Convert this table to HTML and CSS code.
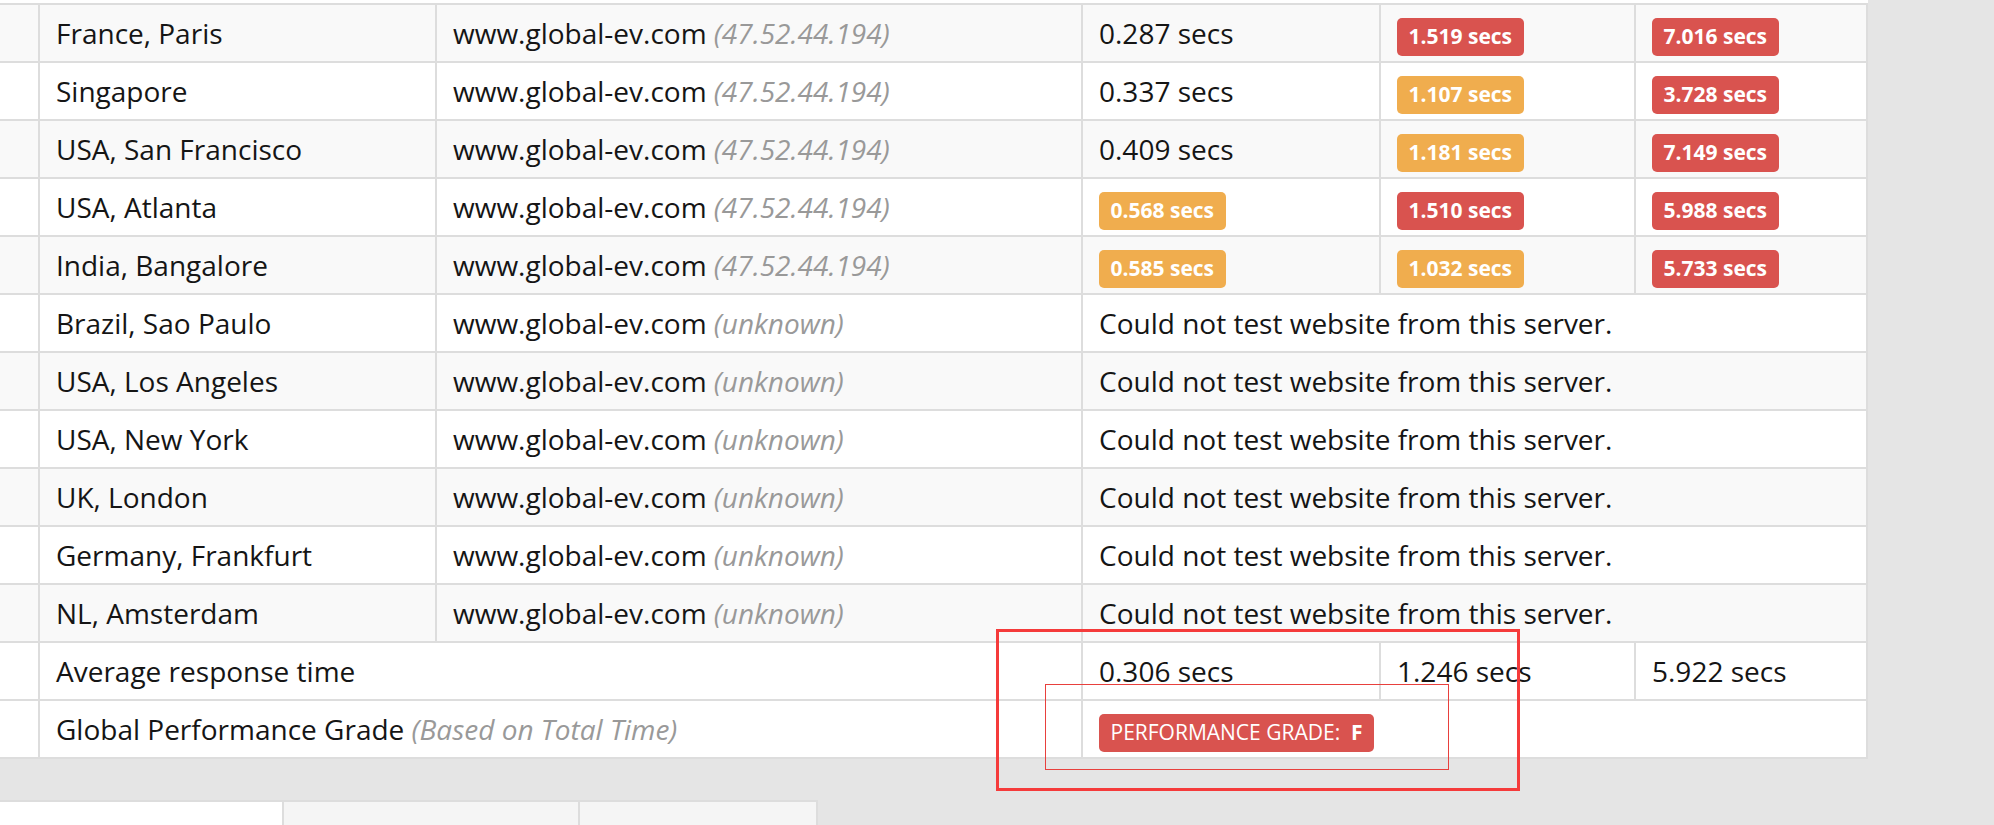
FILE: index.html
```html
<!DOCTYPE html>
<html lang="en">
<head>
<meta charset="utf-8">
<title>Global Performance</title>
<link rel="stylesheet" href="styles.css">
</head>
<body>
<div class="page">
  <div class="panel">
    <div class="results">
      <div class="row striped"><div class="cell"></div><div class="cell">France, Paris</div><div class="cell">www.global-ev.com <em class="ip">(47.52.44.194)</em></div><div class="cell">0.287 secs</div><div class="cell"><span class="label danger">1.519 secs</span></div><div class="cell"><span class="label danger">7.016 secs</span></div></div>
      <div class="row"><div class="cell"></div><div class="cell">Singapore</div><div class="cell">www.global-ev.com <em class="ip">(47.52.44.194)</em></div><div class="cell">0.337 secs</div><div class="cell"><span class="label warning">1.107 secs</span></div><div class="cell"><span class="label danger">3.728 secs</span></div></div>
      <div class="row striped"><div class="cell"></div><div class="cell">USA, San Francisco</div><div class="cell">www.global-ev.com <em class="ip">(47.52.44.194)</em></div><div class="cell">0.409 secs</div><div class="cell"><span class="label warning">1.181 secs</span></div><div class="cell"><span class="label danger">7.149 secs</span></div></div>
      <div class="row"><div class="cell"></div><div class="cell">USA, Atlanta</div><div class="cell">www.global-ev.com <em class="ip">(47.52.44.194)</em></div><div class="cell"><span class="label warning">0.568 secs</span></div><div class="cell"><span class="label danger">1.510 secs</span></div><div class="cell"><span class="label danger">5.988 secs</span></div></div>
      <div class="row striped"><div class="cell"></div><div class="cell">India, Bangalore</div><div class="cell">www.global-ev.com <em class="ip">(47.52.44.194)</em></div><div class="cell"><span class="label warning">0.585 secs</span></div><div class="cell"><span class="label warning">1.032 secs</span></div><div class="cell"><span class="label danger">5.733 secs</span></div></div>
      <div class="row"><div class="cell"></div><div class="cell">Brazil, Sao Paulo</div><div class="cell">www.global-ev.com <em class="ip">(unknown)</em></div><div class="cell span3">Could not test website from this server.</div></div>
      <div class="row striped"><div class="cell"></div><div class="cell">USA, Los Angeles</div><div class="cell">www.global-ev.com <em class="ip">(unknown)</em></div><div class="cell span3">Could not test website from this server.</div></div>
      <div class="row"><div class="cell"></div><div class="cell">USA, New York</div><div class="cell">www.global-ev.com <em class="ip">(unknown)</em></div><div class="cell span3">Could not test website from this server.</div></div>
      <div class="row striped"><div class="cell"></div><div class="cell">UK, London</div><div class="cell">www.global-ev.com <em class="ip">(unknown)</em></div><div class="cell span3">Could not test website from this server.</div></div>
      <div class="row"><div class="cell"></div><div class="cell">Germany, Frankfurt</div><div class="cell">www.global-ev.com <em class="ip">(unknown)</em></div><div class="cell span3">Could not test website from this server.</div></div>
      <div class="row striped"><div class="cell"></div><div class="cell">NL, Amsterdam</div><div class="cell">www.global-ev.com <em class="ip">(unknown)</em></div><div class="cell span3">Could not test website from this server.</div></div>
      <div class="row"><div class="cell"></div><div class="cell span2">Average response time</div><div class="cell">0.306 secs</div><div class="cell">1.246 secs</div><div class="cell">5.922 secs</div></div>
      <div class="row"><div class="cell"></div><div class="cell span2">Global Performance Grade <em class="ip">(Based on Total Time)</em></div><div class="cell span3"><span class="label danger grade">PERFORMANCE GRADE:&nbsp; <b>F</b></span></div></div>
    </div>
  </div>
  <div class="tabs">
    <div class="tab active"></div>
    <div class="tab"></div>
    <div class="tab"></div>
  </div>
  <div class="mark mark-outer"></div>
  <div class="mark mark-inner"></div>
</div>
</body>
</html>
```
FILE: styles.css
```css
html, body {
  margin: 0;
  padding: 0;
}
body {
  background: #e5e5e5;
  font-family: "Open Sans", "Liberation Sans", sans-serif;
  font-size: 28px;
  line-height: 40px;
  color: #151515;
  overflow: hidden;
}
.page {
  position: relative;
  width: 1994px;
  height: 825px;
}
.panel {
  width: 1868px;
  padding-top: 3px;
  background: #fff;
}
.results {
  border-top: 2px solid #dddddd;
}
.row {
  display: grid;
  grid-template-columns: 40px 397px 646px 298px 255px 232px;
  border-bottom: 2px solid #dddddd;
  background: #fff;
}
.row.striped {
  background: #f9f9f9;
}
.cell {
  box-sizing: border-box;
  height: 56px;
  padding: 8px 16px;
  border-right: 2px solid #dddddd;
  white-space: nowrap;
  overflow: hidden;
}
.span2 {
  grid-column: span 2;
}
.span3 {
  grid-column: span 3;
}
.ip {
  color: #999999;
  font-style: italic;
}
.label {
  display: inline;
  padding: 4.2px 11.5px 6.3px;
  font-size: 21px;
  font-weight: 700;
  line-height: 1;
  color: #fff;
  white-space: nowrap;
  vertical-align: baseline;
  border-radius: 5px;
}
.label.warning {
  background: #f0ad4e;
}
.label.danger {
  background: #d9534f;
}
.label.grade {
  font-weight: 400;
}
.label.grade b {
  font-weight: 700;
}
.tabs {
  display: flex;
  margin-top: 41px;
}
.tab {
  box-sizing: border-box;
  height: 40px;
  background: #f5f5f5;
  border-top: 2px solid #dddddd;
  border-right: 2px solid #dddddd;
}
.tab:nth-child(1) {
  width: 284px;
}
.tab:nth-child(2) {
  width: 296px;
}
.tab:nth-child(3) {
  width: 238px;
}
.tab.active {
  background: #fff;
}
.mark {
  position: absolute;
  box-sizing: border-box;
}
.mark-outer {
  left: 996px;
  top: 629px;
  width: 524px;
  height: 162px;
  border: 3px solid #f53b3b;
}
.mark-inner {
  left: 1045px;
  top: 684px;
  width: 404px;
  height: 86px;
  border: 1px solid #e8403d;
}
```
